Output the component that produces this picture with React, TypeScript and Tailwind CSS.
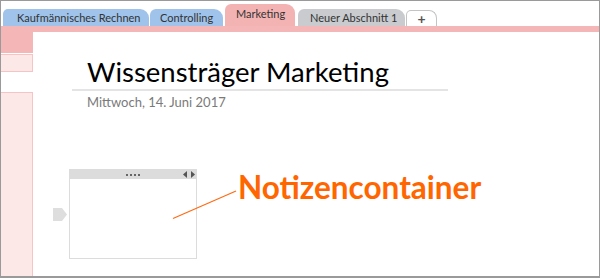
import React from "react";

const tabFont = { fontFamily: 'Lato, "Noto Sans", sans-serif' };

export default function App() {
  return (
    <div className="w-[600px] h-[278px] bg-white border border-b-2 border-[#9a9a9a] flex flex-col overflow-hidden relative" style={{ fontFamily: 'Lato, "Noto Sans", sans-serif' }}>
      {/* tab row */}
      <div className="h-[25px] flex items-end pl-[2px] gap-[1px] text-[11px] text-[#333] whitespace-nowrap" style={tabFont}>
        <div className="h-[17px] w-[146px] bg-[#9fc3ea] rounded-tl-[5px] rounded-tr-[9px] flex items-center pl-[14px] leading-none">Kaufmännisches Rechnen</div>
        <div className="h-[17px] w-[73px] bg-[#9fc3ea] rounded-tl-[6px] rounded-tr-[9px] flex items-center pl-[10px] leading-none">Controlling</div>
        <div className="h-[22px] w-[70px] ml-[1px] bg-[#f4b3b3] rounded-tl-[6px] rounded-tr-[9px] flex items-center pl-[11px] pb-[3px] leading-none">Marketing</div>
        <div className="h-[17px] w-[107px] ml-[2px] bg-[#c9cbcf] rounded-tl-[6px] rounded-tr-[9px] flex items-center pl-[12px] leading-none">Neuer Abschnitt 1</div>
        <div className="h-[16px] w-[31px] bg-white border border-b-0 border-[#c4c4c4] rounded-tl-[5px] rounded-tr-[8px] flex items-center justify-center text-[14px] font-bold text-[#555] leading-none">+</div>
      </div>
      {/* pink strip */}
      <div className="h-[6px] bg-[#f4b6b6]" />
      {/* body */}
      <div className="flex-1 flex">
        <div className="w-[32px] flex flex-col">
          <div className="h-[21px] bg-[#f4b6b6]" />
          <div className="h-[18px] mt-[1px] bg-[#fde8e8] border-y border-r border-[#f5c4c4]" />
          <div className="h-[20px]" />
          <div className="flex-1 bg-[#fde8e8] border-t border-r border-[#f5c4c4]" />
        </div>
        <div className="flex-1 relative">
          <div className="ml-[39px] mt-[23px] w-[376px]">
            <div className="pl-[15px] text-[27.5px] leading-[33px] text-black">Wissensträger Marketing</div>
            <div className="h-[2px] bg-[#e4e4e4] mt-[1px]" />
            <div className="pl-[15px] mt-[3px] text-[13px] leading-[16px] text-[#7a7a7a]">Mittwoch, 14. Juni 2017</div>
          </div>
          {/* note container */}
          <div className="absolute left-[20px] top-[176px] w-[14px] h-[13px]">
            <svg width="14" height="13" viewBox="0 0 14 13"><path d="M0 0 H9 L14 6.5 L9 13 H0 Z" fill="#dedede" /></svg>
          </div>
          <div className="absolute left-[36px] top-[137px] w-[128px] h-[90px] border border-[#dcdcdc] bg-white flex flex-col">
            <div className="h-[9px] bg-[#dcdcdc] relative flex items-center justify-center">
              <div className="flex gap-[2px]">
                <span className="w-[2px] h-[2px] bg-[#666]" />
                <span className="w-[2px] h-[2px] bg-[#666]" />
                <span className="w-[2px] h-[2px] bg-[#666]" />
                <span className="w-[2px] h-[2px] bg-[#666]" />
              </div>
              <svg className="absolute right-[1px] top-[1px]" width="12" height="7" viewBox="0 0 12 7">
                <path d="M4 0 L0 3.5 L4 7 Z" fill="#555" />
                <path d="M8 0 L12 3.5 L8 7 Z" fill="#555" />
              </svg>
            </div>
          </div>
        </div>
      </div>
      {/* annotation */}
      <svg className="absolute left-0 top-0 pointer-events-none" width="600" height="278">
        <line x1="172" y1="217.5" x2="235" y2="190" stroke="#ff6a13" strokeWidth="1.2" />
      </svg>
      <div className="absolute left-[237px] top-[168px] text-[31.5px] font-bold leading-[36px] text-[#ff6600]" style={{ fontFamily: 'Lato, sans-serif' }}>Notizencontainer</div>
    </div>
  );
}
